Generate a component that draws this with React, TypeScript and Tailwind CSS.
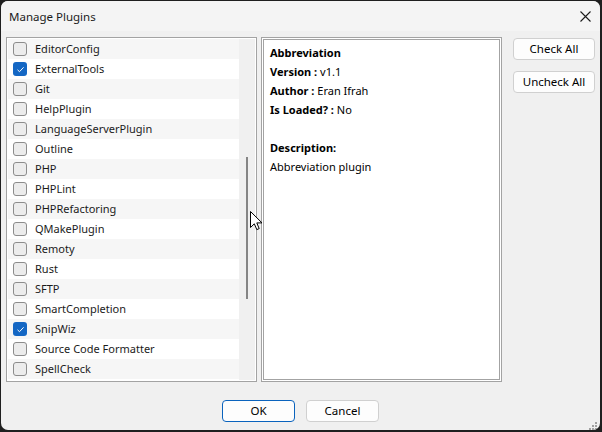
import React from "react";

const plugins: { name: string; checked?: boolean }[] = [
  { name: "EditorConfig" },
  { name: "ExternalTools", checked: true },
  { name: "Git" },
  { name: "HelpPlugin" },
  { name: "LanguageServerPlugin" },
  { name: "Outline" },
  { name: "PHP" },
  { name: "PHPLint" },
  { name: "PHPRefactoring" },
  { name: "QMakePlugin" },
  { name: "Remoty" },
  { name: "Rust" },
  { name: "SFTP" },
  { name: "SmartCompletion" },
  { name: "SnipWiz", checked: true },
  { name: "Source Code Formatter" },
  { name: "SpellCheck" },
];

const CheckBox = ({ checked }: { checked?: boolean }) =>
  checked ? (
    <span className="flex h-[14px] w-[14px] items-center justify-center rounded-[3px] bg-[#1467c4]">
      <svg width="9" height="9" viewBox="0 0 9 9" fill="none">
        <path d="M1.5 4.8 L3.5 6.7 L7.6 2.3" stroke="white" strokeWidth="1" />
      </svg>
    </span>
  ) : (
    <span className="h-[14px] w-[14px] rounded-[3px] border border-[#8c8c8c] bg-[#ececec]" />
  );

const Button = ({ label, primary }: { label: string; primary?: boolean }) => (
  <button
    className={
      primary
        ? "h-[22px] w-[73px] rounded-[4px] border border-[#0a63bd] bg-[#fdfdfd] text-[11.5px] text-black"
        : "h-[22px] w-[73px] rounded-[4px] border border-[#d0d0d0] bg-[#fdfdfd] text-[11.5px] text-black"
    }
  >
    {label}
  </button>
);

export default function App() {
  return (
    <div
      className="relative h-[432px] w-[602px] bg-[#1f1f1f] pb-[2px] pl-[1px] pr-[2px] pt-[1px] text-[#1b1b1b]"
      style={{ fontFamily: '"Noto Sans", "Open Sans", sans-serif' }}
    >
      <div className="flex h-full flex-col overflow-hidden rounded-[7px] bg-[#f0f0f0]">
        {/* title bar */}
        <div className="flex h-[30px] shrink-0 items-center justify-between bg-[#f4f4f4] pl-[8px] pr-[9px]">
          <span className="pt-[1px] text-[11.5px]">Manage Plugins</span>
          <svg width="11" height="11" viewBox="0 0 11 11">
            <path d="M0.5 0.5 L10.5 10.5 M10.5 0.5 L0.5 10.5" stroke="#1b1b1b" strokeWidth="1.1" />
          </svg>
        </div>

        {/* main area */}
        <div className="mt-[6px] flex pl-[5px]">
          {/* plugin list */}
          <div className="flex h-[345px] w-[251px] border border-[#a3a3a3] bg-white p-[1px]">
            <div className="flex-1">
              {plugins.map((p, i) => (
                <div
                  key={p.name}
                  className={
                    i % 2 === 0
                      ? "flex h-[20px] items-center gap-[8px] bg-[#f6f6f6] pl-[5px] text-[11px]"
                      : "flex h-[20px] items-center gap-[8px] bg-white pl-[5px] text-[11px]"
                  }
                >
                  <CheckBox checked={p.checked} />
                  <span className="pt-[1px]">{p.name}</span>
                </div>
              ))}
            </div>
            <div className="flex w-[16px] justify-center bg-[#f0f0f0] pt-[118px]">
              <div className="h-[142px] w-[2px] bg-[#858585]" />
            </div>
          </div>

          {/* details */}
          <div className="ml-[4px] h-[345px] w-[241px] border border-[#a3a3a3] bg-white p-[1px]">
            <div className="h-full border border-[#a3a3a3] bg-white px-[6px] pt-[3px] text-[11px] leading-[19px] text-black">
              <div className="font-bold">Abbreviation</div>
              <div>
                <span className="font-bold">Version :</span> v1.1
              </div>
              <div>
                <span className="font-bold">Author :</span> Eran Ifrah
              </div>
              <div>
                <span className="font-bold">Is Loaded? :</span> No
              </div>
              <div className="h-[19px]" />
              <div className="font-bold">Description:</div>
              <div>Abbreviation plugin</div>
            </div>
          </div>

          {/* side buttons */}
          <div className="ml-[11px] flex flex-col gap-[11px] pt-[1px]">
            <button className="h-[22px] w-[82px] rounded-[4px] border border-[#d0d0d0] bg-[#fdfdfd] text-[11.5px] text-black">
              Check All
            </button>
            <button className="h-[22px] w-[82px] rounded-[4px] border border-[#d0d0d0] bg-[#fdfdfd] text-[11.5px] text-black">
              Uncheck All
            </button>
          </div>
        </div>

        {/* bottom buttons */}
        <div className="relative mt-[18px] flex justify-center gap-[11px]">
          <Button label="OK" primary />
          <Button label="Cancel" />
          <svg className="absolute bottom-[-9px] right-[2px]" width="10" height="10" viewBox="0 0 10 10">
            <g fill="#a0a0a0">
              <rect x="7" y="1" width="2" height="2" />
              <rect x="4" y="4" width="2" height="2" />
              <rect x="7" y="4" width="2" height="2" />
              <rect x="1" y="7" width="2" height="2" />
              <rect x="4" y="7" width="2" height="2" />
              <rect x="7" y="7" width="2" height="2" />
            </g>
          </svg>
        </div>
      </div>

      {/* mouse cursor */}
      <svg className="absolute left-[250px] top-[211px]" width="14" height="21" viewBox="0 0 14 21">
        <path
          d="M0.5 0.5 L0.5 16.5 L4.3 12.8 L6.8 18.6 L9.2 17.6 L6.8 11.9 L12 11.9 Z"
          fill="white"
          stroke="black"
          strokeWidth="1"
          strokeLinejoin="round"
        />
      </svg>
    </div>
  );
}
